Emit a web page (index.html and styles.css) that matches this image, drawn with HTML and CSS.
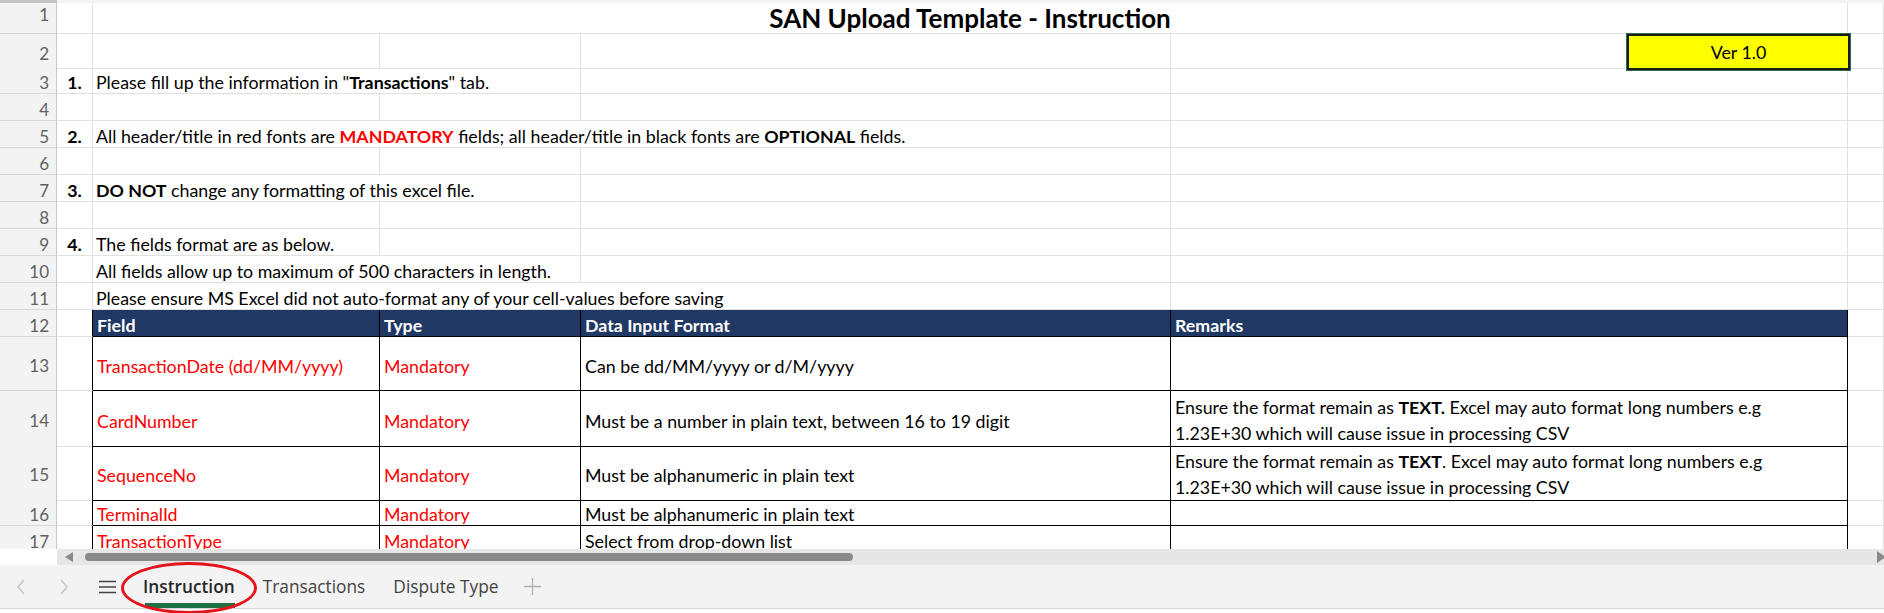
FILE: index.html
```html
<!DOCTYPE html>
<html lang="en">
<head>
    <meta charset="UTF-8">
    <title>SAN Upload Template - Instruction</title>
    <link rel="stylesheet" href="styles.css">
</head>
<body>
    <div class="top-strip"><div class="corner"></div><div class="colheads"></div></div>

    <div class="grid">
        <div class="row r1">
            <div class="rh">1</div>
            <div class="c"></div>
            <div class="c title span4">SAN Upload Template - Instruction</div>
            <div class="c"></div>
        </div>
        <div class="row r2">
            <div class="rh">2</div>
            <div class="c"></div>
            <div class="c"></div>
            <div class="c"></div>
            <div class="c"></div>
            <div class="c ver-cell"><div class="ver">Ver 1.0</div></div>
            <div class="c"></div>
        </div>
        <div class="row">
            <div class="rh">3</div>
            <div class="c num">1.</div>
            <div class="c span2"><span>Please fill up the information in "<b>Transactions</b>" tab.</span></div>
            <div class="c"></div>
            <div class="c"></div>
            <div class="c"></div>
        </div>
        <div class="row">
            <div class="rh">4</div>
            <div class="c"></div><div class="c"></div><div class="c"></div><div class="c"></div><div class="c"></div><div class="c"></div>
        </div>
        <div class="row">
            <div class="rh">5</div>
            <div class="c num">2.</div>
            <div class="c span3"><span>All header/title in red fonts are <b class="red">MANDATORY</b> fields; all header/title in black fonts are <b>OPTIONAL</b> fields.</span></div>
            <div class="c"></div>
            <div class="c"></div>
        </div>
        <div class="row">
            <div class="rh">6</div>
            <div class="c"></div><div class="c"></div><div class="c"></div><div class="c"></div><div class="c"></div><div class="c"></div>
        </div>
        <div class="row">
            <div class="rh">7</div>
            <div class="c num">3.</div>
            <div class="c span2"><span><b>DO NOT</b> change any formatting of this excel file.</span></div>
            <div class="c"></div>
            <div class="c"></div>
            <div class="c"></div>
        </div>
        <div class="row">
            <div class="rh">8</div>
            <div class="c"></div><div class="c"></div><div class="c"></div><div class="c"></div><div class="c"></div><div class="c"></div>
        </div>
        <div class="row">
            <div class="rh">9</div>
            <div class="c num">4.</div>
            <div class="c">The fields format are as below.</div>
            <div class="c"></div>
            <div class="c"></div>
            <div class="c"></div>
            <div class="c"></div>
        </div>
        <div class="row">
            <div class="rh">10</div>
            <div class="c"></div>
            <div class="c span2">All fields allow up to maximum of 500 characters in length.</div>
            <div class="c"></div>
            <div class="c"></div>
            <div class="c"></div>
        </div>
        <div class="row">
            <div class="rh">11</div>
            <div class="c"></div>
            <div class="c span3">Please ensure MS Excel did not auto-format any of your cell-values before saving</div>
            <div class="c"></div>
            <div class="c"></div>
        </div>

        <!-- field table -->
        <div class="row">
            <div class="rh">12</div>
            <div class="c edge"></div>
            <div class="c t th">Field</div>
            <div class="c t th">Type</div>
            <div class="c t th">Data Input Format</div>
            <div class="c t th">Remarks</div>
            <div class="c"></div>
        </div>
        <div class="row tall">
            <div class="rh">13</div>
            <div class="c edge"></div>
            <div class="c t red">TransactionDate (dd/MM/yyyy)</div>
            <div class="c t red">Mandatory</div>
            <div class="c t">Can be dd/MM/yyyy or d/M/yyyy</div>
            <div class="c t"></div>
            <div class="c"></div>
        </div>
        <div class="row tall">
            <div class="rh">14</div>
            <div class="c edge"></div>
            <div class="c t red">CardNumber</div>
            <div class="c t red">Mandatory</div>
            <div class="c t">Must be a number in plain text, between 16 to 19 digit</div>
            <div class="c t wrap"><p>Ensure the format remain as <b>TEXT.</b> Excel may auto format long numbers e.g<br>1.23E+30 which will cause issue in processing CSV</p></div>
            <div class="c"></div>
        </div>
        <div class="row tall">
            <div class="rh">15</div>
            <div class="c edge"></div>
            <div class="c t red">SequenceNo</div>
            <div class="c t red">Mandatory</div>
            <div class="c t">Must be alphanumeric in plain text</div>
            <div class="c t wrap"><p>Ensure the format remain as <b>TEXT</b>. Excel may auto format long numbers e.g<br>1.23E+30 which will cause issue in processing CSV</p></div>
            <div class="c"></div>
        </div>
        <div class="row">
            <div class="rh">16</div>
            <div class="c edge"></div>
            <div class="c t red">TerminalId</div>
            <div class="c t red">Mandatory</div>
            <div class="c t">Must be alphanumeric in plain text</div>
            <div class="c t"></div>
            <div class="c"></div>
        </div>
        <div class="row">
            <div class="rh">17</div>
            <div class="c edge"></div>
            <div class="c t red">TransactionType</div>
            <div class="c t red">Mandatory</div>
            <div class="c t">Select from drop-down list</div>
            <div class="c t"></div>
            <div class="c"></div>
        </div>
    </div>

    <div class="hscroll">
        <div class="hscroll-gap"></div>
        <div class="track">
            <span class="arrow-left"></span>
            <span class="thumb"></span>
            <span class="arrow-right"></span>
        </div>
    </div>

    <div class="tabbar">
        <span class="nav-btn">
            <svg width="10" height="16" viewBox="0 0 10 16"><polyline points="8,1 2,8 8,15" fill="none" stroke="#c2c2c2" stroke-width="1.3"/></svg>
        </span>
        <span class="nav-btn">
            <svg width="10" height="16" viewBox="0 0 10 16"><polyline points="2,1 8,8 2,15" fill="none" stroke="#c2c2c2" stroke-width="1.3"/></svg>
        </span>
        <span class="nav-btn menu">
            <svg width="17" height="14" viewBox="0 0 17 14"><path d="M0 1.5h17M0 7h17M0 12.5h17" stroke="#444" stroke-width="1.6"/></svg>
        </span>
        <span class="tab active">Instruction</span>
        <span class="tab">Transactions</span>
        <span class="tab">Dispute Type</span>
        <span class="add">
            <svg width="17" height="17" viewBox="0 0 17 17"><path d="M8.5 0v17M0 8.5h17" stroke="#b0b0b0" stroke-width="1.3"/></svg>
        </span>
        <span class="mark"></span>
    </div>
</body>
</html>
```

FILE: styles.css
```css
body {
    margin: 0;
    width: 1884px;
    height: 613px;
    overflow: hidden;
    background-color: #fff;
    font-family: Lato, "Open Sans", sans-serif;
    color: #000;
    position: relative;
}
.top-strip {
    display: flex;
    height: 3px;
}
.corner {
    width: 57px;
    background-color: #c4c4c4;
}
.colheads {
    flex: 1;
    background-color: #f3f3f3;
}
.grid {
    height: 546px;
    overflow: hidden;
}
.row {
    display: grid;
    grid-template-columns: 57px 36px 287px 201px 590px 677px 36px;
    height: 27px;
}
.row.r1 {
    height: 31px;
}
.row.r2 {
    height: 33px;
}
.row.tall {
    height: 54px;
}
.rh {
    box-sizing: border-box;
    background-color: #f3f3f3;
    border-right: 1px solid #c6c6c6;
    border-bottom: 1px solid #dadada;
    color: #616161;
    font-size: 17px;
    display: flex;
    align-items: center;
    justify-content: flex-end;
    padding: 4px 7px 0 0;
}
.r1 .rh {
    align-items: flex-start;
    padding-top: 1px;
}
.c {
    box-sizing: border-box;
    border-right: 1px solid #e1e1e1;
    border-bottom: 1px solid #e1e1e1;
    padding: 0 3px;
    font-size: 17.8px;
    line-height: 22px;
    white-space: nowrap;
    display: flex;
    align-items: flex-end;
    min-width: 0;
}
.span2 {
    grid-column: span 2;
}
.span3 {
    grid-column: span 3;
}
.span4 {
    grid-column: span 4;
}
.title {
    justify-content: center;
    align-items: flex-start;
    font-size: 26px;
    font-weight: 700;
    line-height: 28px;
    padding-top: 1px;
}
.num {
    justify-content: center;
    font-weight: 700;
}
.red {
    color: #ff0000;
}
.ver-cell {
    justify-content: flex-end;
    padding: 0;
}
.ver {
    box-sizing: border-box;
    flex: none;
    width: 223px;
    height: 36px;
    margin: 0 -3px -2px 0;
    background-color: #ffff00;
    border: 2px solid #1a1a1a;
    box-shadow: 0 0 0 1px #2b6e48;
    display: flex;
    align-items: center;
    justify-content: center;
    font-size: 17.8px;
    position: relative;
    z-index: 1;
}
.edge {
    border-right-color: #000;
}
.c.t {
    border-right-color: #000;
    border-bottom-color: #000;
    padding: 0 4px;
}
.tall .c.t {
    align-items: center;
    padding-top: 4px;
}
.th {
    background-color: #203864;
    color: #fff;
    font-weight: 700;
}
.c.t.wrap {
    white-space: nowrap;
    line-height: 26px;
    padding-top: 3px;
}
.wrap p {
    margin: 0;
}
.hscroll {
    display: flex;
    height: 16px;
}
.hscroll-gap {
    width: 57px;
}
.track {
    flex: 1;
    background-color: #e6e6e6;
    display: flex;
    align-items: center;
    padding-left: 8px;
    overflow: hidden;
}
.arrow-left {
    width: 0;
    height: 0;
    border-top: 5px solid transparent;
    border-bottom: 5px solid transparent;
    border-right: 8px solid #8a8a8a;
}
.thumb {
    width: 768px;
    height: 8px;
    margin-left: 12px;
    border-radius: 4px;
    background-color: #8a8a8a;
}
.arrow-right {
    width: 0;
    height: 0;
    margin-left: auto;
    margin-right: -2px;
    border-top: 6px solid transparent;
    border-bottom: 6px solid transparent;
    border-left: 9px solid #8a8a8a;
}
.tabbar {
    display: flex;
    align-items: center;
    height: 43px;
    background-color: #f3f3f3;
    border-bottom: 1px solid #d6d6d6;
    font-family: "Open Sans", "Noto Sans", sans-serif;
    font-size: 17.3px;
    color: #424242;
}
.nav-btn {
    width: 44px;
    display: flex;
    justify-content: center;
}
.nav-btn:first-child {
    width: 42px;
}
.nav-btn.menu {
    width: 43px;
}
.tab {
    position: relative;
    height: 100%;
    display: flex;
    align-items: center;
    padding: 0 14px;
}
.tab.active {
    font-weight: 600;
    color: #262626;
}
.tab.active::after {
    content: "";
    position: absolute;
    left: 16px;
    right: 14px;
    bottom: 0;
    height: 5px;
    background-color: #1e7145;
}
.add {
    display: flex;
    margin-left: 12px;
}
.mark {
    position: absolute;
    left: 121px;
    top: 562px;
    width: 136px;
    height: 52px;
    box-sizing: border-box;
    border: 3.5px solid #e3141c;
    border-radius: 50%;
}
```
